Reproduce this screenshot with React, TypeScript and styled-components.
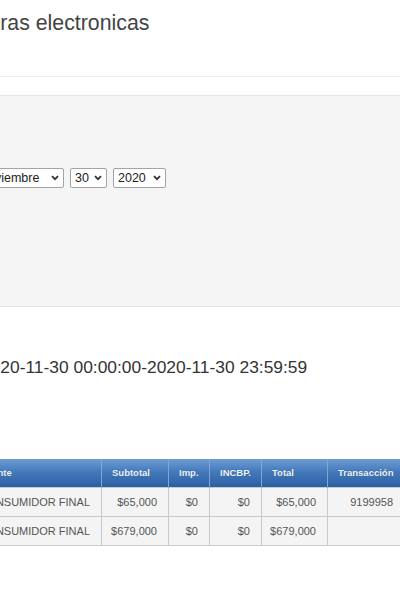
import React from 'react';
import styled, { createGlobalStyle } from 'styled-components';

const GlobalStyle = createGlobalStyle`
  html, body {
    margin: 0;
    padding: 0;
    background: #ffffff;
    overflow: hidden;
  }
  body {
    font-family: 'Liberation Sans', Arial, sans-serif;
    color: #333;
  }
`;

const Viewport = styled.div`
  width: 400px;
  height: 600px;
  overflow: hidden;
`;

// the page is wider than the window; its left part falls outside the shot
const Content = styled.div`
  margin-left: -60px;
  width: 480px;
`;

const PageHeader = styled.div`
  height: 65px;
  padding: 11px 0 0 7px;
  border-bottom: 1px solid #eeeeee;
`;

const Title = styled.h3`
  margin: 0;
  font-size: 21.3px;
  line-height: 24px;
  font-weight: normal;
  color: #444;
  white-space: nowrap;
`;

const Well = styled.div`
  margin-top: 18px;
  height: 138px;
  padding: 72px 0 0 34px;
  background: #f5f5f5;
  border-top: 1px solid #e6e6e6;
  border-bottom: 1px solid #e3e3e3;
`;

const DateRow = styled.div`
  display: flex;
  gap: 6px;
`;

const SelectBox = styled.div<{ $w: number }>`
  position: relative;
  width: ${(p) => p.$w}px;
  height: 20px;
`;

const Select = styled.select`
  appearance: none;
  box-sizing: border-box;
  width: 100%;
  height: 100%;
  margin: 0;
  padding: 0 0 0 4px;
  border: 1px solid #a4a4a4;
  border-radius: 2px;
  background: #fff;
  font-family: 'Liberation Sans', Arial, sans-serif;
  font-size: 12.5px;
  color: #222;
  outline: none;
`;

const Chevron = styled.svg`
  position: absolute;
  right: 5px;
  top: 7px;
  width: 8px;
  height: 6px;
  pointer-events: none;
`;

const RangeText = styled.div`
  margin-top: 50px;
  padding-left: 41px;
  font-size: 17.4px;
  line-height: 20px;
  color: #333;
  white-space: nowrap;
`;

const Table = styled.table`
  margin: 82px 0 0 29px;
  border-collapse: collapse;
  table-layout: fixed;
  width: 435px;
`;

const Th = styled.th`
  height: 28px;
  padding: 0 0 0 10px;
  box-sizing: border-box;
  text-align: left;
  font-size: 9.5px;
  font-weight: bold;
  color: #eef4fb;
  text-shadow: 0 0 1px rgba(0, 0, 0, 0.25);
  background: linear-gradient(to bottom, #6c9cd4 0%, #4479ba 45%, #2a5fa2 100%);
  border-left: 1px solid #7ea5d3;
  border-right: 1px solid #7ea5d3;
  white-space: nowrap;
`;

const Td = styled.td`
  height: 28px;
  padding: 0 11px 0 0;
  text-align: right;
  font-size: 11px;
  color: #555;
  background: #f4f4f4;
  border: 1px solid #c9c9c9;
  white-space: nowrap;
`;

const ChevronIcon = () => (
  <Chevron viewBox="0 0 8 6">
    <path d="M1 1.2 L4 4.2 L7 1.2" fill="none" stroke="#333" strokeWidth="1.8" />
  </Chevron>
);

interface Row {
  cliente: string;
  subtotal: string;
  imp: string;
  incbp: string;
  total: string;
  transaccion: string;
}

const rows: Row[] = [
  { cliente: 'CONSUMIDOR FINAL', subtotal: '$65,000', imp: '$0', incbp: '$0', total: '$65,000', transaccion: '9199958' },
  { cliente: 'CONSUMIDOR FINAL', subtotal: '$679,000', imp: '$0', incbp: '$0', total: '$679,000', transaccion: '' },
];

const columns = [132, 67, 41, 52, 66, 77];

export default function App() {
  return (
    <Viewport>
      <GlobalStyle />
      <Content>
        <PageHeader>
          <Title>Facturas electronicas</Title>
        </PageHeader>

        <Well>
          <DateRow>
            <SelectBox $w={90}>
              <Select defaultValue="11">
                <option value="10">Octubre</option>
                <option value="11">Noviembre</option>
                <option value="12">Diciembre</option>
              </Select>
              <ChevronIcon />
            </SelectBox>
            <SelectBox $w={37}>
              <Select defaultValue="30">
                <option value="29">29</option>
                <option value="30">30</option>
              </Select>
              <ChevronIcon />
            </SelectBox>
            <SelectBox $w={53}>
              <Select defaultValue="2020">
                <option value="2019">2019</option>
                <option value="2020">2020</option>
              </Select>
              <ChevronIcon />
            </SelectBox>
          </DateRow>
        </Well>

        <RangeText>2020-11-30 00:00:00-2020-11-30 23:59:59</RangeText>

        <Table>
          <colgroup>
            {columns.map((w, i) => (
              <col key={i} style={{ width: w }} />
            ))}
          </colgroup>
          <thead>
            <tr>
              <Th>Cliente</Th>
              <Th>Subtotal</Th>
              <Th>Imp.</Th>
              <Th>INCBP.</Th>
              <Th>Total</Th>
              <Th>Transacción</Th>
            </tr>
          </thead>
          <tbody>
            {rows.map((r, i) => (
              <tr key={i}>
                <Td>{r.cliente}</Td>
                <Td>{r.subtotal}</Td>
                <Td>{r.imp}</Td>
                <Td>{r.incbp}</Td>
                <Td>{r.total}</Td>
                <Td>{r.transaccion}</Td>
              </tr>
            ))}
          </tbody>
        </Table>
      </Content>
    </Viewport>
  );
}
